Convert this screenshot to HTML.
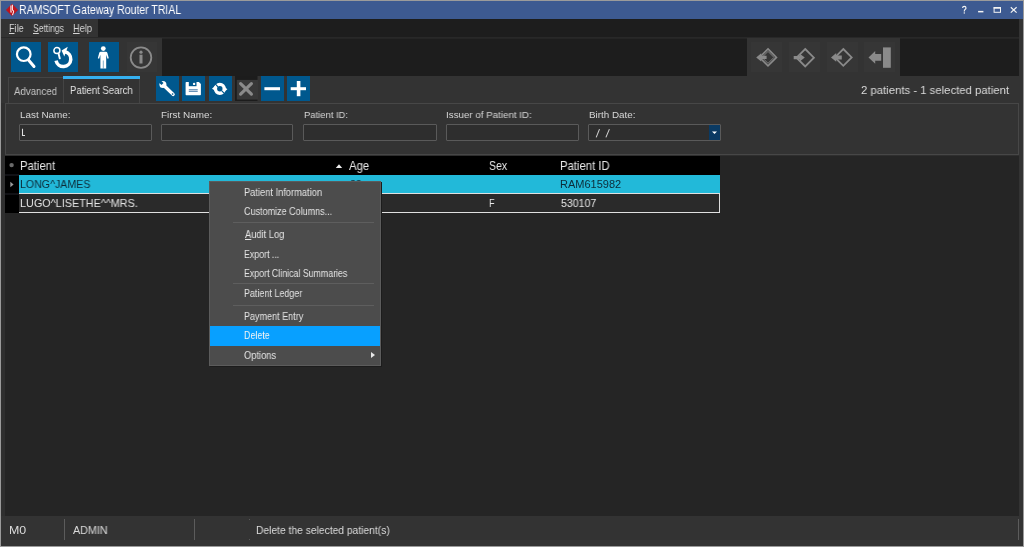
<!DOCTYPE html>
<html><head><meta charset="utf-8">
<style>
*{box-sizing:border-box;margin:0;padding:0}
html,body{width:1024px;height:547px;overflow:hidden;background:#9b9b9b}
body{position:relative;font-family:"Liberation Sans",sans-serif;color:#e6e6e6}
.a{position:absolute}
.t{position:absolute;white-space:pre;line-height:1;transform-origin:0 0;will-change:transform}
u{text-decoration-thickness:1px;text-underline-offset:1px}
.blue{background:#00588e}
</style></head><body>
<!-- window base -->
<div class="a" style="left:1px;top:1px;width:1022px;height:545px;background:#2f2f2f"></div>
<!-- title bar -->
<div class="a" style="left:1px;top:1px;width:1022px;height:18px;background:#3d5a91"></div>
<svg class="a" style="left:5px;top:3px" width="14" height="14" viewBox="0 0 14 14">
 <path d="M7 0.8 L13.1 6.9 L7 13 L0.9 6.9Z" fill="#bf141c"/>
 <path d="M5.9 2.6 V8.9 H6.9 M7.4 1.8 V6.2 Q7.4 7.2 8.4 7.8 Q9 8.6 8.2 10 L7.5 12.2" stroke="#fff" stroke-width="1.05" fill="none" opacity="0.92"/>
</svg>
<svg class="a" style="left:960px;top:5px" width="60" height="10" viewBox="0 0 60 10">
 <path d="M2.6 2.9 Q2.6 1.4 4.3 1.4 Q6 1.4 6 2.9 Q6 3.9 5 4.5 Q4.3 5 4.3 6.2 V6.6" stroke="#f4f4f4" stroke-width="1.15" fill="none"/>
 <rect x="3.7" y="7.3" width="1.2" height="1.3" fill="#f4f4f4"/>
 <rect x="18.1" y="5.9" width="5.3" height="1.5" fill="#f4f4f4"/>
 <rect x="34.1" y="2.6" width="6.4" height="4.7" stroke="#f4f4f4" stroke-width="1" fill="none"/>
 <rect x="33.6" y="2.1" width="7.4" height="1.6" fill="#f4f4f4"/>
 <path d="M50.8 2.3 L56.6 7.6 M56.6 2.3 L50.8 7.6" stroke="#f4f4f4" stroke-width="1.2"/>
</svg>

<!-- menu bar -->
<div class="a" style="left:1px;top:19px;width:97px;height:18px;background:#333333"></div>
<div class="a" style="left:98px;top:19px;width:921px;height:18px;background:#1d1d1d"></div>
<div class="a" style="left:1px;top:37px;width:1018px;height:1px;background:#282828"></div>

<!-- toolbar -->
<div class="a" style="left:1px;top:38px;width:161px;height:38px;background:#333333"></div>
<div class="a" style="left:162px;top:38px;width:585px;height:38px;background:#1d1d1d"></div>
<div class="a" style="left:162px;top:38px;width:585px;height:1px;background:#252525"></div>
<div class="a" style="left:747px;top:38px;width:153px;height:38px;background:#333333"></div>
<div class="a" style="left:900px;top:38px;width:119px;height:38px;background:#1d1d1d"></div>
<div class="a" style="left:900px;top:38px;width:119px;height:1px;background:#252525"></div>
<div class="a" style="left:1019px;top:19px;width:4px;height:497px;background:#333333"></div>

<div class="a blue" style="left:11px;top:42px;width:30px;height:30px"></div>
<div class="a blue" style="left:48px;top:42px;width:30px;height:30px"></div>
<div class="a blue" style="left:89px;top:42px;width:30px;height:30px"></div>
<div class="a" style="left:127px;top:42px;width:30px;height:30px;background:#363636"></div>

<div class="a" style="left:751px;top:42px;width:31px;height:30px;background:#363636"></div>
<div class="a" style="left:789px;top:42px;width:31px;height:30px;background:#363636"></div>
<div class="a" style="left:827px;top:42px;width:31px;height:30px;background:#363636"></div>
<div class="a" style="left:864px;top:42px;width:31px;height:30px;background:#363636"></div>

<svg class="a" style="left:11px;top:42px" width="30" height="30" viewBox="0 0 30 30">
 <circle cx="12.75" cy="12.2" r="6.8" stroke="#fff" stroke-width="2.2" fill="none"/>
 <path d="M17.5 18 L23 24.5" stroke="#fff" stroke-width="3" stroke-linecap="round"/>
</svg>
<svg class="a" style="left:48px;top:42px" width="30" height="30" viewBox="0 0 30 30">
 <circle cx="8.9" cy="8.6" r="3.0" stroke="#fff" stroke-width="1.5" fill="none"/>
 <path d="M10.6 11.8 L11.8 16.4" stroke="#fff" stroke-width="1.9" stroke-linecap="round"/>
 <path d="M8.06 18.65 A7.45 7.45 0 1 0 16.9 9.81" stroke="#fff" stroke-width="3.5" fill="none"/>
 <path d="M19.8 4.7 L13.6 8.6 L16.3 14.4 Z" fill="#fff"/>
</svg>
<svg class="a" style="left:89px;top:42px" width="30" height="30" viewBox="0 0 30 30">
 <circle cx="14.3" cy="6.6" r="2.4" fill="#fff"/>
 <path d="M11.8 9.8 H16.8 Q18.1 9.8 18.4 11 L19.8 16.3 L18.5 16.8 L17.2 12.8 V26.5 H11.4 V12.8 L10.1 16.8 L8.8 16.3 L10.2 11 Q10.5 9.8 11.8 9.8Z" fill="#fff"/>
 <path d="M14.3 18.5 V26.5" stroke="#00588e" stroke-width="0.5"/>
</svg>
<svg class="a" style="left:127px;top:42px" width="30" height="30" viewBox="0 0 30 30">
 <circle cx="14" cy="15.6" r="10.3" stroke="#8a8a8a" stroke-width="1.8" fill="none"/>
 <circle cx="14" cy="10.2" r="1.6" fill="#8a8a8a"/>
 <rect x="12.5" y="12.7" width="3" height="8.8" fill="#8a8a8a"/>
</svg>
<svg class="a" style="left:751px;top:42px" width="31" height="30" viewBox="0 0 31 30">
 <path d="M17 6.9 L25.5 15.4 L17 23.9 L8.5 15.4Z" stroke="#8a8a8a" stroke-width="1.6" fill="none"/>
 <path d="M17 9.4 L23 15.4 L17 21.4 L11 15.4Z" stroke="#8a8a8a" stroke-width="0.9" fill="none"/>
 <path d="M5.2 15.4 L10.2 11.3 V13.8 H15.6 V17.1 H10.2 V19.5Z" fill="#8a8a8a"/>
</svg>
<svg class="a" style="left:789px;top:42px" width="31" height="30" viewBox="0 0 31 30">
 <path d="M16.2 7 L24.9 15.7 L16.2 24.4 L7.5 15.7Z" stroke="#8a8a8a" stroke-width="1.8" fill="none"/>
 <path d="M4.7 14 H10.8 V11.7 L15.8 15.6 L10.8 19.5 V17.3 H4.7Z" fill="#8a8a8a"/>
</svg>
<svg class="a" style="left:827px;top:42px" width="31" height="30" viewBox="0 0 31 30">
 <path d="M16.3 7 L24.7 15.4 L16.3 23.8 L7.9 15.4Z" stroke="#8a8a8a" stroke-width="1.8" fill="none"/>
 <path d="M4 15.4 L9.2 11 V13.6 H14.8 V17.4 H9.2 V19.8Z" fill="#8a8a8a"/>
</svg>
<svg class="a" style="left:864px;top:42px" width="31" height="30" viewBox="0 0 31 30">
 <rect x="19" y="5.4" width="7.8" height="20.4" fill="#8a8a8a"/>
 <path d="M4.5 15.4 L11.2 9.1 V12 H17.2 V18.7 H11.2 V21.8Z" fill="#8a8a8a"/>
</svg>

<!-- tab row -->
<div class="a" style="left:1px;top:76px;width:1018px;height:27px;background:#333333"></div>
<div class="a" style="left:8px;top:77px;width:56px;height:26px;border:1px solid #444;border-bottom:none"></div>
<div class="a" style="left:63px;top:79px;width:77px;height:24px;border:1px solid #444;border-bottom:none;border-top:none"></div>
<div class="a" style="left:63px;top:76px;width:77px;height:3px;background:#35b0f0"></div>

<div class="a blue" style="left:156px;top:76px;width:23px;height:25px"></div>
<div class="a blue" style="left:182px;top:76px;width:23px;height:25px"></div>
<div class="a blue" style="left:209px;top:76px;width:23px;height:25px"></div>
<div class="a blue" style="left:261px;top:76px;width:23px;height:25px"></div>
<div class="a blue" style="left:287px;top:76px;width:23px;height:25px"></div>
<svg class="a" style="left:156px;top:76px" width="23" height="25" viewBox="0 0 23 25">
 <circle cx="6.9" cy="8.5" r="3.5" fill="#fff"/>
 <path d="M7.9 9.5 L17.1 18.4" stroke="#fff" stroke-width="3.4" stroke-linecap="round"/>
 <path d="M7.5 7.1 L5.5 9.1 L1.8 5.4 L3.8 3.4Z" fill="#00588e"/>
 <circle cx="16.6" cy="18.0" r="0.85" fill="#00588e"/>
</svg>
<svg class="a" style="left:182px;top:76px" width="23" height="25" viewBox="0 0 23 25">
 <path d="M4.4 6 H16.9 L18.9 8 V18.6 Q18.9 19.3 18.2 19.3 H4.3 Q3.6 19.3 3.6 18.6 V6.8 Q3.6 6 4.4 6Z" fill="#fff"/>
 <rect x="6.8" y="6" width="7.7" height="4.2" fill="#00588e"/>
 <circle cx="12.1" cy="7.9" r="1.2" fill="#fff"/>
 <rect x="6.8" y="13.1" width="8.9" height="1.2" fill="#6a93b8"/>
 <rect x="6.8" y="14.8" width="8.9" height="1.2" fill="#6a93b8"/>
</svg>
<svg class="a" style="left:209px;top:76px" width="23" height="25" viewBox="0 0 23 25">
 <circle cx="10.85" cy="12.85" r="4.4" stroke="#fff" stroke-width="3.3" fill="none"/>
 <path d="M3 12.7 L7.6 8.2 L7.6 15.4Z" fill="#fff"/>
 <path d="M18.4 13.2 L13.8 9.6 L13.8 17Z" fill="#fff"/>
 <path d="M6.2 7.9 L9.0 10.9 M12.8 14.9 L15.8 17.9" stroke="#00588e" stroke-width="1.2"/>
</svg>
<svg class="a" style="left:235px;top:76px" width="23" height="25" viewBox="0 0 23 25">
 <rect x="0" y="0" width="22.5" height="25" fill="#1c1c1c"/>
 <rect x="1.8" y="3.9" width="21.2" height="19.7" fill="#383838"/>
 <path d="M5.6 7.6 L16.4 18.1 M16.4 7.6 L5.6 18.1" stroke="#8a8a8a" stroke-width="3.2" stroke-linecap="round"/>
</svg>
<svg class="a" style="left:261px;top:76px" width="23" height="25" viewBox="0 0 23 25">
 <rect x="3.4" y="11.2" width="15.6" height="3" fill="#fff"/>
</svg>
<svg class="a" style="left:287px;top:76px" width="23" height="25" viewBox="0 0 23 25">
 <rect x="3.7" y="11.2" width="15.3" height="3" fill="#fff"/>
 <rect x="9.8" y="5" width="3.6" height="15.2" fill="#fff"/>
</svg>

<!-- search panel -->
<div class="a" style="left:5px;top:103px;width:1014px;height:52px;border:1px solid #474747;background:#333333"></div>
<div class="a" style="left:19px;top:124px;width:133px;height:17px;border:1px solid #5a5a5a;border-radius:1px;background:#2e2e2e"></div>
<div class="a" style="left:161px;top:124px;width:132px;height:17px;border:1px solid #5a5a5a;border-radius:1px;background:#2e2e2e"></div>
<div class="a" style="left:303px;top:124px;width:134px;height:17px;border:1px solid #5a5a5a;border-radius:1px;background:#2e2e2e"></div>
<div class="a" style="left:446px;top:124px;width:133px;height:17px;border:1px solid #5a5a5a;border-radius:1px;background:#2e2e2e"></div>
<div class="a" style="left:588px;top:124px;width:133px;height:17px;border:1px solid #5a5a5a;border-radius:1px;background:#2e2e2e"></div>
<div class="a" style="left:709px;top:125px;width:11px;height:15px;background:#0a3a63"></div>
<svg class="a" style="left:709px;top:125px" width="11" height="15" viewBox="0 0 11 15"><path d="M3 6.5 H8 L5.5 9Z" fill="#fff"/></svg>
<svg class="a" style="left:20px;top:127px" width="8" height="10" viewBox="0 0 8 10"><path d="M2.5 1.8 V8.4 H5" stroke="#e0e0e0" stroke-width="1.05" fill="none"/></svg>
<svg class="a" style="left:594px;top:128px" width="18" height="11" viewBox="0 0 18 11"><path d="M5.5 1.1 L2.2 9.4 M15.4 1.1 L11.9 9.4" stroke="#d0d0d0" stroke-width="1.05" fill="none"/></svg>

<!-- main area -->
<div class="a" style="left:5px;top:156px;width:1014px;height:360px;background:#252525"></div>
<div class="a" style="left:5px;top:156px;width:715px;height:19px;background:#000"></div>
<div class="a" style="left:5px;top:175px;width:14px;height:38px;background:#000"></div>
<div class="a" style="left:19px;top:175px;width:701px;height:18px;background:#22b9d9"></div>
<div class="a" style="left:19px;top:193px;width:701px;height:1px;background:#e0e0e0"></div>
<div class="a" style="left:19px;top:194px;width:701px;height:18px;background:#2a2a2a;border-right:1px solid #ddd"></div>
<div class="a" style="left:19px;top:212px;width:701px;height:1px;background:#e0e0e0"></div>
<svg class="a" style="left:335px;top:163px" width="8" height="6" viewBox="0 0 8 6"><path d="M0.8 5 L4 1.2 L7.2 5Z" fill="#eee"/></svg>
<svg class="a" style="left:5px;top:156px" width="14" height="57" viewBox="0 0 14 57">
 <circle cx="6.6" cy="9.1" r="2.2" fill="#6a6a6a"/>
 <rect x="0" y="18.5" width="14" height="1" fill="#23232b"/>
 <rect x="0" y="37.5" width="14" height="1" fill="#23232b"/>
 <path d="M5.3 25.8 L8.6 28.5 L5.3 31.2Z" fill="#9a9a9a"/>
</svg>

<!-- context menu -->
<div class="a" style="left:209px;top:181px;width:172px;height:185px;background:#4c4c4c;border:1px solid #5c5c5c"></div>
<div class="a" style="left:381px;top:182px;width:1px;height:185px;background:#1c1c1c"></div>
<div class="a" style="left:210px;top:366px;width:172px;height:1px;background:#1c1c1c"></div>
<div class="a" style="left:210px;top:326px;width:170px;height:20px;background:#08a0ff"></div>
<div class="a" style="left:233px;top:222px;width:141px;height:1px;background:#5e5e5e"></div>
<div class="a" style="left:233px;top:283px;width:141px;height:1px;background:#5e5e5e"></div>
<div class="a" style="left:233px;top:305px;width:141px;height:1px;background:#5e5e5e"></div>
<svg class="a" style="left:370px;top:351px" width="6" height="8" viewBox="0 0 6 8"><path d="M1 0.9 L5 4 L1 7.1Z" fill="#e8e8e8"/></svg>

<!-- status bar -->
<div class="a" style="left:1px;top:516px;width:1022px;height:30px;background:#333333"></div>
<div class="a" style="left:64px;top:519px;width:1px;height:21px;background:#5c5c5c"></div>
<div class="a" style="left:194px;top:519px;width:1px;height:21px;background:#5c5c5c"></div>
<div class="a" style="left:1018px;top:519px;width:1px;height:21px;background:#5c5c5c"></div>
<div class="a" style="left:249px;top:519px;width:1px;height:1px;background:#5a5a5a"></div>
<div class="a" style="left:249px;top:539px;width:1px;height:1px;background:#5a5a5a"></div>

<div class="t" style="left:18.96px;top:3.88px;font-size:12.03px;color:#ffffff;transform:scaleX(0.8719)">RAMSOFT Gateway Router TRIAL</div>
<div class="t" style="left:9.47px;top:23.76px;font-size:10.40px;color:#d4d4d4;transform:scaleX(0.8746)"><u>F</u>ile</div>
<div class="t" style="left:33.26px;top:23.76px;font-size:10.40px;color:#d4d4d4;transform:scaleX(0.8250)"><u>S</u>ettings</div>
<div class="t" style="left:73.06px;top:23.76px;font-size:10.40px;color:#d4d4d4;transform:scaleX(0.8919)"><u>H</u>elp</div>
<div class="t" style="left:14.40px;top:85.74px;font-size:11.01px;color:#c4c4c4;transform:scaleX(0.8807)">Advanced</div>
<div class="t" style="left:69.94px;top:85.21px;font-size:11.16px;color:#e2e2e2;transform:scaleX(0.8566)">Patient Search</div>
<div class="t" style="left:861.03px;top:84.22px;font-size:11.74px;color:#dcdcdc;transform:scaleX(0.9660)">2 patients - 1 selected patient</div>
<div class="t" style="left:19.61px;top:109.52px;font-size:9.86px;color:#d8d8d8;transform:scaleX(1.0054)">Last Name:</div>
<div class="t" style="left:160.61px;top:109.52px;font-size:9.86px;color:#d8d8d8;transform:scaleX(1.0068)">First Name:</div>
<div class="t" style="left:303.64px;top:109.52px;font-size:9.86px;color:#d8d8d8;transform:scaleX(0.9581)">Patient ID:</div>
<div class="t" style="left:445.62px;top:109.52px;font-size:9.86px;color:#d8d8d8;transform:scaleX(0.9918)">Issuer of Patient ID:</div>
<div class="t" style="left:588.72px;top:109.52px;font-size:9.86px;color:#d8d8d8;transform:scaleX(0.9955)">Birth Date:</div>
<div class="t" style="left:19.70px;top:160.70px;font-size:11.88px;color:#e8e8e8;transform:scaleX(0.9508)">Patient</div>
<div class="t" style="left:349.00px;top:160.70px;font-size:11.88px;color:#e8e8e8;transform:scaleX(0.9558)">Age</div>
<div class="t" style="left:489.28px;top:160.70px;font-size:11.88px;color:#e8e8e8;transform:scaleX(0.8851)">Sex</div>
<div class="t" style="left:560.09px;top:160.70px;font-size:11.88px;color:#e8e8e8;transform:scaleX(0.9521)">Patient ID</div>
<div class="t" style="left:19.75px;top:179.24px;font-size:11.01px;color:#0d2b38;transform:scaleX(0.9636)">LONG^JAMES</div>
<div class="t" style="left:560.12px;top:179.24px;font-size:11.01px;color:#0d2b38;transform:scaleX(1.0010)">RAM615982</div>
<div class="t" style="left:349.68px;top:179.25px;font-size:11.00px;color:#0d2b38;transform:scaleX(0.9559);clip-path:inset(0 0 calc(100% - 1.75px) 0)">33</div>
<div class="t" style="left:19.54px;top:198.16px;font-size:10.87px;color:#e6e6e6;transform:scaleX(0.9944)">LUGO^LISETHE^^MRS.</div>
<div class="t" style="left:488.96px;top:198.16px;font-size:10.87px;color:#e6e6e6;transform:scaleX(0.8464)">F</div>
<div class="t" style="left:561.38px;top:198.16px;font-size:10.87px;color:#e6e6e6;transform:scaleX(0.9736)">530107</div>
<div class="t" style="left:243.86px;top:187.64px;font-size:10.30px;color:#e4e4e4;transform:scaleX(0.9030)">Patient Information</div>
<div class="t" style="left:244.15px;top:207.44px;font-size:10.30px;color:#e4e4e4;transform:scaleX(0.8749)">Customize Columns...</div>
<div class="t" style="left:244.60px;top:229.75px;font-size:10.30px;color:#e4e4e4;transform:scaleX(0.9058)"><u>A</u>udit Log</div>
<div class="t" style="left:243.89px;top:249.55px;font-size:10.30px;color:#e4e4e4;transform:scaleX(0.8560)">Export ...</div>
<div class="t" style="left:243.89px;top:268.75px;font-size:10.30px;color:#e4e4e4;transform:scaleX(0.8559)">Export Clinical Summaries</div>
<div class="t" style="left:243.78px;top:288.64px;font-size:10.30px;color:#e4e4e4;transform:scaleX(0.8707)">Patient Ledger</div>
<div class="t" style="left:243.78px;top:311.55px;font-size:10.30px;color:#e4e4e4;transform:scaleX(0.8767)">Payment Entry</div>
<div class="t" style="left:243.79px;top:330.55px;font-size:10.30px;color:#f4f4f4;transform:scaleX(0.8643)">Delete</div>
<div class="t" style="left:244.13px;top:350.55px;font-size:10.30px;color:#e4e4e4;transform:scaleX(0.9058)">Options</div>
<div class="t" style="left:8.71px;top:524.64px;font-size:11.01px;color:#dcdcdc;transform:scaleX(1.1268)">M0</div>
<div class="t" style="left:72.60px;top:524.64px;font-size:11.01px;color:#dcdcdc;transform:scaleX(0.9771)">ADMIN</div>
<div class="t" style="left:256.08px;top:524.64px;font-size:11.01px;color:#dcdcdc;transform:scaleX(0.9344)">Delete the selected patient(s)</div>

</body></html>
